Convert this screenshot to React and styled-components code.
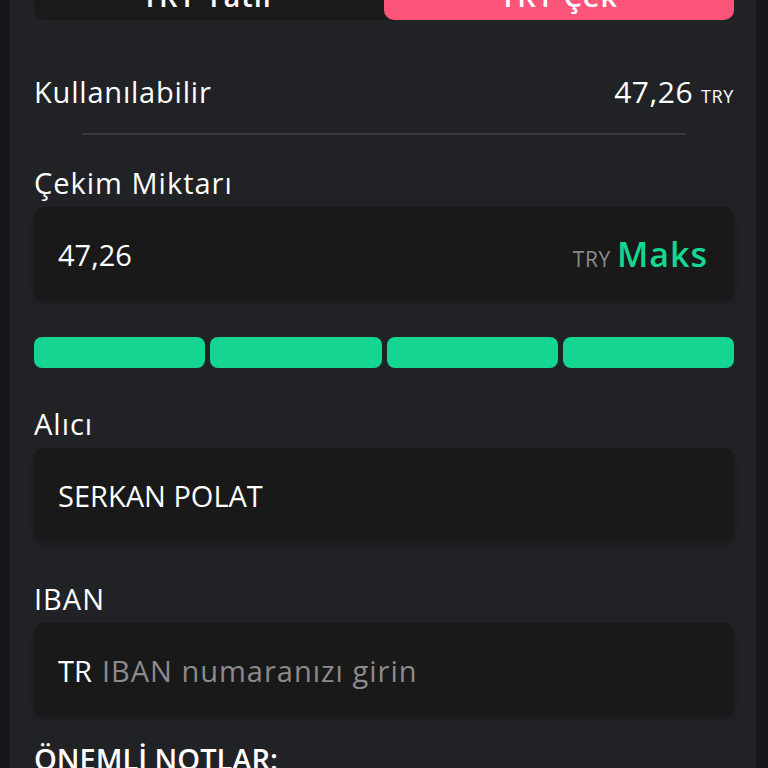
import styled, { createGlobalStyle } from "styled-components";

const GlobalStyle = createGlobalStyle`
	html, body {
		margin: 0;
		padding: 0;
		background: #161719;
		overflow: hidden;
	}
	* {
		box-sizing: border-box;
	}
`;

const Screen = styled.div`
	height: 768px;
	overflow: hidden;
	padding: 0 12px 0 10px;
	font-family: "Open Sans", "Noto Sans", sans-serif;
	color: #ffffff;
`;

const Panel = styled.div`
	display: flex;
	flex-direction: column;
	height: 100%;
	background: #212226;
	padding: 0 22px 0 24px;
`;

const Tabs = styled.div`
	display: flex;
	flex: none;
	height: 50px;
	margin-top: -30px;
	background: #1a1a1b;
	border-radius: 10px;
`;

const Tab = styled.div`
	flex: 1;
	display: flex;
	align-items: center;
	justify-content: center;
	border-radius: 10px;
	font-size: 29px;
	font-weight: 600;
	letter-spacing: 1px;
	background: ${(p) => (p.$active ? "#fc5579" : "transparent")};
`;

const BalanceRow = styled.div`
	display: flex;
	flex: none;
	align-items: center;
	justify-content: space-between;
	height: 34px;
	margin-top: 54px;
`;

const BalanceLabel = styled.span`
	font-size: 29px;
	letter-spacing: 0.8px;
`;

const Amount = styled.span`
	font-size: 30px;
	font-weight: 500;
	letter-spacing: 0.5px;
`;

const Unit = styled.span`
	font-size: ${(p) => p.$size || 18}px;
	font-weight: 500;
	letter-spacing: 0.6px;
	margin-left: 8px;
	color: ${(p) => p.$color || "#ffffff"};
`;

const Divider = styled.div`
	flex: none;
	height: 2px;
	background: #38393d;
	margin: 25px 48px 0;
`;

const Label = styled.div`
	flex: none;
	height: 34px;
	line-height: 34px;
	font-size: 29px;
	letter-spacing: ${(p) => (p.$bold ? 0 : 1)}px;
	font-weight: ${(p) => (p.$bold ? 600 : 400)};
	margin-top: ${(p) => p.$top}px;
	margin-bottom: 7px;
`;

const Field = styled.div`
	display: flex;
	flex: none;
	align-items: center;
	justify-content: space-between;
	height: 94px;
	padding: 0 26px 0 24px;
	background: #19191a;
	border-radius: 10px;
	box-shadow: 0 2px 6px rgba(0, 0, 0, 0.25);
	font-size: 29px;
`;

const Placeholder = styled.span`
	color: #8b8b8d;
	margin-left: 10px;
	letter-spacing: 1px;
`;

const MaxGroup = styled.div`
	display: flex;
	align-items: baseline;
`;

const MaxButton = styled.span`
	color: #14d690;
	font-size: 34px;
	font-weight: 600;
	letter-spacing: 1px;
	margin-left: 6px;
`;

const Bars = styled.div`
	display: grid;
	flex: none;
	grid-template-columns: repeat(4, 1fr);
	gap: 5px;
	margin-top: 36px;
`;

const Bar = styled.div`
	height: 31px;
	border-radius: 8px;
	background: ${(p) => (p.$on ? "#14d690" : "#3a3b3f")};
`;

export default function App() {
	const level = 4;
	return (
		<>
			<GlobalStyle />
			<Screen>
				<Panel>
					<Tabs>
						<Tab>TRY Yatır</Tab>
						<Tab $active>TRY Çek</Tab>
					</Tabs>

					<BalanceRow>
						<BalanceLabel>Kullanılabilir</BalanceLabel>
						<span>
							<Amount>47,26</Amount>
							<Unit>TRY</Unit>
						</span>
					</BalanceRow>
					<Divider />

					<Label $top={31}>Çekim Miktarı</Label>
					<Field>
						<span>47,26</span>
						<MaxGroup>
							<Unit $color="#8b8b8d" $size={21}>TRY</Unit>
							<MaxButton>Maks</MaxButton>
						</MaxGroup>
					</Field>

					<Bars>
						{[1, 2, 3, 4].map((i) => (
							<Bar key={i} $on={i <= level} />
						))}
					</Bars>

					<Label $top={39}>Alıcı</Label>
					<Field>
						<span>SERKAN POLAT</span>
					</Field>

					<Label $top={40}>IBAN</Label>
					<Field>
						<span>
							TR<Placeholder>IBAN numaranızı girin</Placeholder>
						</span>
					</Field>

					<Label $top={25} $bold>
						ÖNEMLİ NOTLAR:
					</Label>
				</Panel>
			</Screen>
		</>
	);
}
